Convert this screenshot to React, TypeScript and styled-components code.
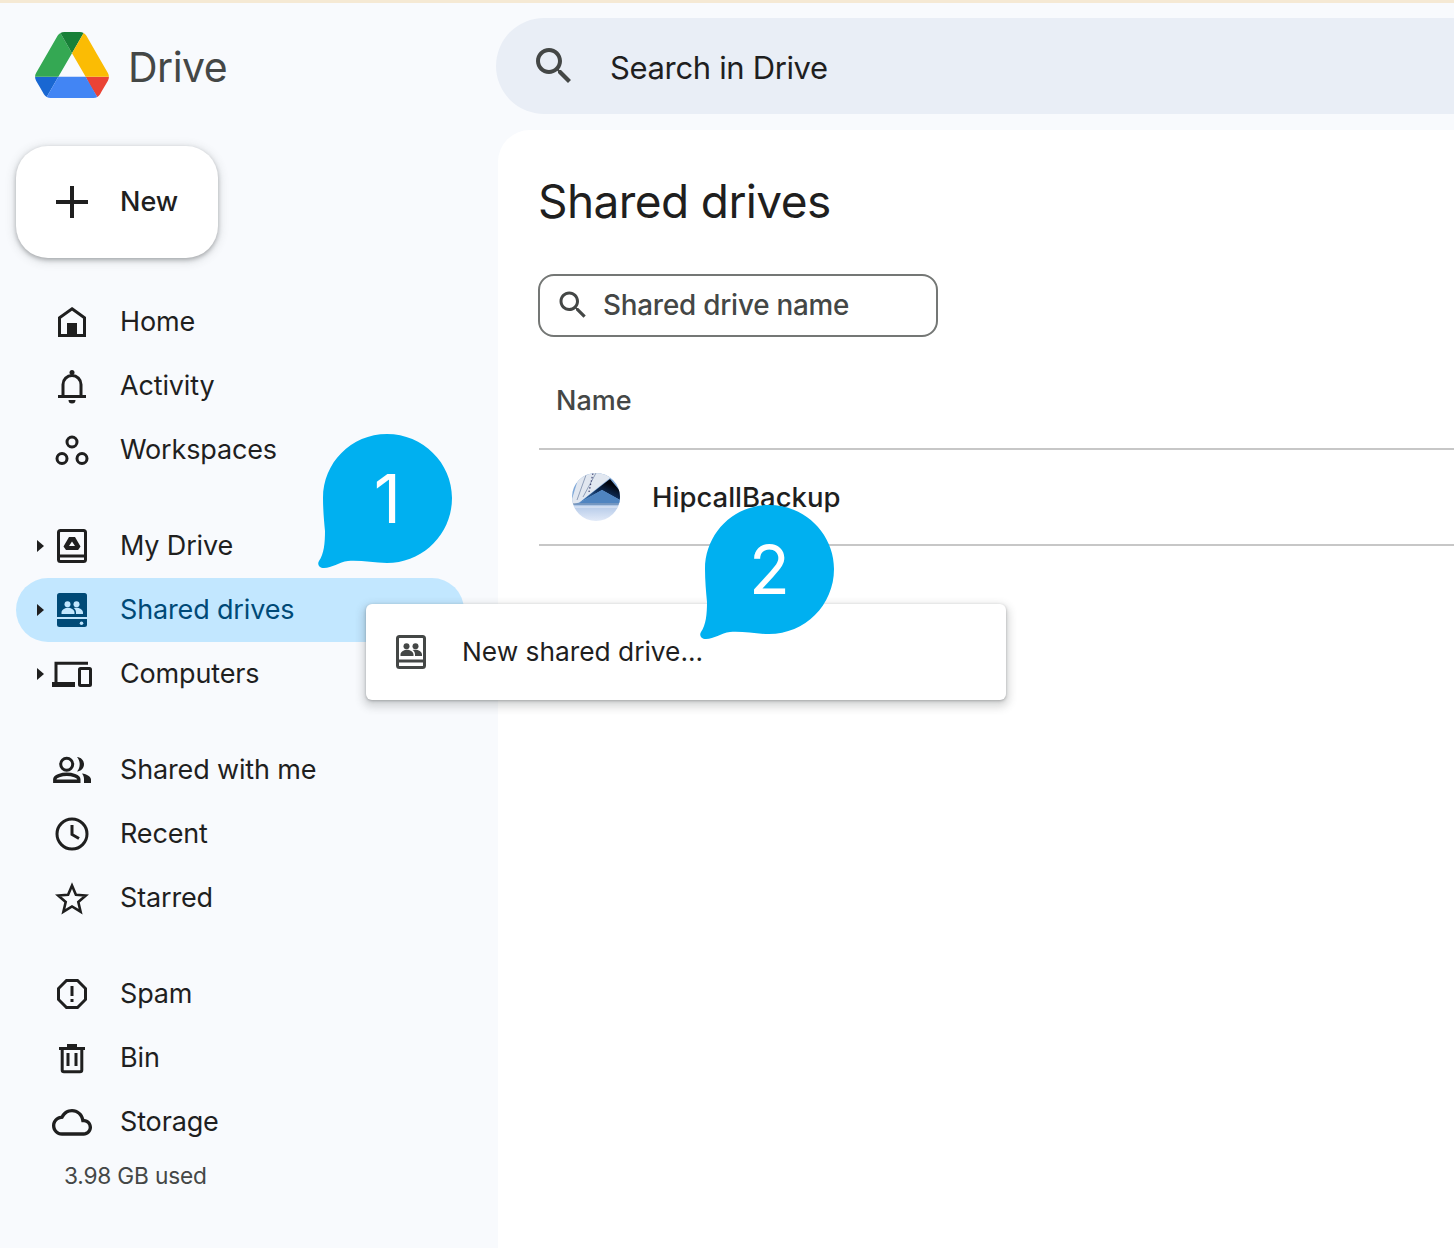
import React from 'react'
import styled, { createGlobalStyle } from 'styled-components'

const SANS = '"Inter", "Roboto", "Liberation Sans", sans-serif'

const GlobalStyle = createGlobalStyle`
  html, body {
    margin: 0;
    padding: 0;
    background: #f8fafd;
  }

  body {
    font-family: ${SANS};
    color: #1f1f1f;
  }
`

const Page = styled.div`
  position: relative;
  display: grid;
  grid-template-columns: 498px 1fr;
  width: 1454px;
  height: 1248px;
  overflow: hidden;
  box-sizing: border-box;
  border-top: 3px solid #f5e9d4;
  background: #f8fafd;
`

const Sidebar = styled.aside`
  display: flex;
  flex-direction: column;
  padding-top: 29px;
`

const Brand = styled.div`
  display: flex;
  align-items: center;
  height: 66px;
  padding-left: 35px;
  gap: 19px;
`

const BrandName = styled.span`
  padding-top: 4px;
  font-size: 41px;
  font-weight: 400;
  letter-spacing: -0.5px;
  color: #444746;
`

const NewButton = styled.button`
  display: flex;
  align-items: center;
  width: 202px;
  height: 112px;
  margin: 48px 0 32px 16px;
  padding: 0 0 2px 32px;
  gap: 24px;
  border: 0;
  border-radius: 32px;
  background: #fff;
  box-shadow: 0 2px 4px rgba(60, 64, 67, 0.35), 0 2px 10px 2px rgba(60, 64, 67, 0.15);
  font-family: inherit;
  font-size: 27px;
  font-weight: 500;
  color: #1f1f1f;

  svg {
    margin-top: 2px;
  }
`

const NavGroup = styled.nav`
  display: flex;
  flex-direction: column;
  margin-bottom: 32px;

  &:last-of-type {
    margin-bottom: 0;
  }
`

const NavRow = styled.div<{ $active?: boolean }>`
  display: flex;
  align-items: center;
  width: 448px;
  height: 64px;
  margin-left: 16px;
  padding-left: 16px;
  box-sizing: border-box;
  border-radius: 32px;
  background: ${p => (p.$active ? '#c2e7ff' : 'transparent')};
  color: ${p => (p.$active ? '#004a77' : '#1f1f1f')};
  font-size: 27px;
  letter-spacing: -0.15px;
`

const CaretSlot = styled.span`
  display: flex;
  align-items: center;
  justify-content: center;
  width: 16px;
  height: 16px;
`

const Caret = styled.span`
  width: 0;
  height: 0;
  margin-left: 1px;
  border-top: 6px solid transparent;
  border-bottom: 6px solid transparent;
  border-left: 7px solid #1f1f1f;
`

const Icon = styled.svg<{ $size?: number }>`
  flex: none;
  width: ${p => p.$size || 48}px;
  height: ${p => p.$size || 48}px;
  fill: currentColor;
`

const NavLabel = styled.span`
  margin-left: 24px;
  padding-bottom: 2px;
`

const StorageUsed = styled.div`
  margin: 7px 0 0 64px;
  font-size: 22.7px;
  line-height: 30px;
  letter-spacing: -0.2px;
  color: #444746;
`

const Content = styled.div`
  display: flex;
  flex-direction: column;
  padding-top: 15px;
`

const SearchBar = styled.div`
  display: flex;
  align-items: center;
  height: 96px;
  margin-left: -2px;
  padding-left: 34px;
  gap: 32px;
  border-radius: 48px 0 0 48px;
  background: #e9eef6;
  font-size: 31px;
  color: #1f1f1f;
  letter-spacing: -0.35px;
`

const SearchText = styled.span`
  padding-top: 2px;
`

const Card = styled.main`
  flex: 1;
  margin-top: 16px;
  padding: 39px 0 0 41px;
  border-radius: 32px 0 0 0;
  background: #fff;
`

const Title = styled.h1`
  margin: 0 0 41px -1px;
  font-size: 46px;
  font-weight: 400;
  line-height: 64px;
  letter-spacing: -0.6px;
  color: #1f1f1f;
`

const FilterBox = styled.div`
  display: flex;
  align-items: center;
  width: 400px;
  height: 63px;
  margin-left: -1px;
  padding: 0 0 1px 15px;
  gap: 12px;
  box-sizing: border-box;
  border: 2px solid #747775;
  border-radius: 16px;
  font-size: 27.8px;
  font-weight: 500;
  color: #444746;
  letter-spacing: -0.2px;
`

const TableHead = styled.div`
  display: flex;
  align-items: center;
  height: 113px;
  padding: 16px 0 0 17px;
  box-sizing: border-box;
  border-bottom: 2px solid #c7c7c7;
  font-size: 27px;
  font-weight: 500;
  color: #444746;
`

const TableRow = styled.div`
  display: flex;
  align-items: center;
  height: 96px;
  padding-left: 33px;
  gap: 32px;
  box-sizing: border-box;
  border-bottom: 2px solid #c7c7c7;
  font-size: 27.5px;
  font-weight: 500;
  color: #1f1f1f;
`

const Avatar = styled.svg`
  flex: none;
  width: 48px;
  height: 48px;
`

const Menu = styled.div`
  position: absolute;
  left: 366px;
  top: 601px;
  z-index: 2;
  display: flex;
  align-items: center;
  width: 640px;
  height: 96px;
  padding-left: 21px;
  gap: 27px;
  box-sizing: border-box;
  border-radius: 6px;
  background: #fff;
  box-shadow: 0 4px 8px 3px rgba(60, 64, 67, 0.2), 0 1px 3px rgba(60, 64, 67, 0.35);
  font-size: 26.3px;
  color: #1f1f1f;
`

const MenuIcon = styled.span`
  display: flex;
  color: #444746;
`

const MenuLabel = styled.span`
  padding-bottom: 2px;
`

const Bubble = styled.div<{ $left: number; $top: number }>`
  position: absolute;
  left: ${p => p.$left}px;
  top: ${p => p.$top}px;
  z-index: 3;
  width: 136px;
  height: 136px;

  svg {
    display: block;
    width: 136px;
    height: 136px;
    fill: #00b0f0;
  }
`

const BubbleNumber = styled.span`
  position: absolute;
  left: 6px;
  top: 1px;
  display: flex;
  align-items: center;
  justify-content: center;
  width: 129px;
  height: 129px;
  font-size: 67px;
  font-weight: 400;
  color: #fff;
`

const SEARCH_PATH =
  'M15.5 14h-.79l-.28-.27C15.41 12.59 16 11.11 16 9.5 16 5.91 13.09 3 9.5 3S3 5.91 3 9.5 5.91 16 9.5 16c1.61 0 3.09-.59 4.23-1.57l.27.28v.79l5 4.99L20.49 19l-4.99-5zm-6 0C7.01 14 5 11.99 5 9.5S7.01 5 9.5 5 14 7.01 14 9.5 11.99 14 9.5 14z'

const PEOPLE_HEADS = (
  <>
    <circle cx="19.5" cy="18.3" r="3" />
    <circle cx="28.5" cy="18.3" r="3" />
  </>
)

const PEOPLE_BODIES =
  'M13.5 28v-1.5c0-3 4-4.8 6.5-4.8s6.5 1.8 6.5 4.8V28zM28 28v-1.5c0-2-1-3.4-2.4-4.4.9-.3 2-.4 3-.4 2.6 0 6.4 1.8 6.4 4.8V28z'

const line = { fill: 'none', stroke: 'currentColor', strokeWidth: 3 }

const glyphs: Record<string, React.ReactNode> = {
  home: (
    <>
      <path {...line} d="M24 10.8 36.5 19.8V37.5H11.5V19.8Z" />
      <rect x="19" y="25" width="10" height="14" />
    </>
  ),
  activity: (
    <>
      <path {...line} d="M15 34V22.5a9 9 0 0 1 18 0V34" />
      <path {...line} d="M10 34.5H38" />
      <circle cx="24" cy="10.5" r="2.5" />
      <path d="M20.5 38h7a3.5 3.5 0 0 1-7 0z" />
    </>
  ),
  workspaces: (
    <>
      <circle {...line} cx="24" cy="16" r="5" />
      <circle {...line} cx="14" cy="32.5" r="5" />
      <circle {...line} cx="34" cy="32.5" r="5" />
    </>
  ),
  myDrive: (
    <>
      <rect {...line} x="10.5" y="8.5" width="27" height="31" rx="2" />
      <path {...line} d="M10.5 34H37.5" />
      <path
        fillRule="evenodd"
        d="M21 15h6l5.5 9.5-2.4 3.5H18l-2.5-3.5zM24 19.6 21 24h6z"
      />
    </>
  ),
  sharedDrives: (
    <>
      <path d="M11.5 7h25A2.5 2.5 0 0 1 39 9.5V31H9V9.5A2.5 2.5 0 0 1 11.5 7z" />
      <path d="M9 33h30v5.5a2.5 2.5 0 0 1-2.5 2.5h-25A2.5 2.5 0 0 1 9 38.5z" />
      <circle cx="33.5" cy="37.3" r="1.8" fill="#c2e7ff" />
      <g fill="#c2e7ff">
        {PEOPLE_HEADS}
        <path d={PEOPLE_BODIES} />
      </g>
    </>
  ),
  computers: (
    <>
      <path {...line} d="M8 34.5V13.2H40" />
      <path d="M4 32h23v5H4z" />
      <rect {...line} x="31.5" y="18.5" width="11" height="17" rx="1" />
    </>
  ),
  sharedWithMe: (
    <>
      <circle {...line} cx="18.7" cy="18.2" r="6" />
      <path {...line} strokeWidth={3.4} d="M6.8 35.3v-2c0-3 7-5 12-5s12 2 12 5v2z" />
      <path d="M29 11c4 .3 7 3.4 7 7.3s-3 7-7 7.3c1.7-2 2.7-4.5 2.7-7.3S30.7 13 29 11z" />
      <path d="M34 27.5c5 .7 9 3 9 6V37h-7v-4c0-2.3-.8-4-2-5.5z" />
    </>
  ),
  recent: (
    <>
      <circle {...line} cx="24" cy="24" r="15" />
      <path {...line} d="M24 15v9.5l7 4" />
    </>
  ),
  starred: (
    <path
      {...line}
      strokeWidth={2.6}
      d="M24 11.5l3.9 9.2 9.9.8-7.5 6.5 2.3 9.7-8.6-5.2-8.6 5.2 2.3-9.7-7.5-6.5 9.9-.8z"
    />
  ),
  spam: (
    <>
      <path {...line} d="M18.5 10.5h11l8 8v11l-8 8h-11l-8-8v-11z" />
      <rect x="22.5" y="16" width="3" height="10" />
      <rect x="22.5" y="29" width="3" height="3" />
    </>
  ),
  bin: (
    <>
      <path {...line} d="M11 14.5H37" />
      <path {...line} d="M19 11.5h10" />
      <path {...line} d="M14.2 14V36a1.8 1.8 0 0 0 1.8 1.8h16a1.8 1.8 0 0 0 1.8-1.8V14" />
      <rect x="18.5" y="19" width="3" height="13" />
      <rect x="26.5" y="19" width="3" height="13" />
    </>
  ),
  storage: (
    <path
      transform="translate(4 4.3) scale(1.667)"
      d="M19.35 10.04C18.67 6.59 15.64 4 12 4 9.11 4 6.6 5.64 5.35 8.04 2.34 8.36 0 10.91 0 14c0 3.31 2.69 6 6 6h13c2.76 0 5-2.24 5-5 0-2.64-2.05-4.78-4.65-4.96zM19 18H6c-2.21 0-4-1.79-4-4 0-2.05 1.53-3.76 3.56-3.97l1.07-.11.5-.95C8.08 7.14 9.94 6 12 6c2.62 0 4.88 1.86 5.39 4.43l.3 1.5 1.53.11c1.56.1 2.78 1.41 2.78 2.96 0 1.65-1.35 3-3 3z"
    />
  ),
  newDrive: (
    <>
      <rect {...line} x="10.5" y="8.5" width="27" height="31" rx="2" />
      <path {...line} d="M10.5 33H37.5" />
      {PEOPLE_HEADS}
      <path d={PEOPLE_BODIES} />
    </>
  ),
}

type NavItem = { id: string; label: string; caret?: boolean; active?: boolean }

const groups: NavItem[][] = [
  [
    { id: 'home', label: 'Home' },
    { id: 'activity', label: 'Activity' },
    { id: 'workspaces', label: 'Workspaces' },
  ],
  [
    { id: 'myDrive', label: 'My Drive', caret: true },
    { id: 'sharedDrives', label: 'Shared drives', caret: true, active: true },
    { id: 'computers', label: 'Computers', caret: true },
  ],
  [
    { id: 'sharedWithMe', label: 'Shared with me' },
    { id: 'recent', label: 'Recent' },
    { id: 'starred', label: 'Starred' },
  ],
  [
    { id: 'spam', label: 'Spam' },
    { id: 'bin', label: 'Bin' },
    { id: 'storage', label: 'Storage' },
  ],
]

const DriveLogo = () => (
  <svg width="74" height="66" viewBox="0 0 87.3 78">
    <path d="m6.6 66.85 3.85 6.65c.8 1.4 1.95 2.5 3.3 3.3l13.75-23.8h-27.5c0 1.55.4 3.1 1.2 4.5z" fill="#1967d2" />
    <path d="m43.65 25-13.75-23.8c-1.35.8-2.5 1.9-3.3 3.3l-25.4 44a9.06 9.06 0 0 0-1.2 4.5h27.5z" fill="#34a853" />
    <path d="m73.55 76.8c1.35-.8 2.5-1.9 3.3-3.3l1.6-2.75 7.65-13.25c.8-1.4 1.2-2.95 1.2-4.5h-27.502l5.852 11.5z" fill="#ea4335" />
    <path d="m43.65 25 13.75-23.8c-1.35-.8-2.9-1.2-4.5-1.2h-18.5c-1.6 0-3.15.45-4.5 1.2z" fill="#188038" />
    <path d="m59.8 53h-32.3l-13.75 23.8c1.35.8 2.9 1.2 4.5 1.2h50.8c1.6 0 3.15-.45 4.5-1.2z" fill="#4285f4" />
    <path d="m73.4 26.5-12.7-22c-.8-1.4-1.95-2.5-3.3-3.3l-13.75 23.8 16.15 28h27.45c0-1.55-.4-3.1-1.2-4.5z" fill="#fbbc04" />
  </svg>
)

const DriveAvatar = () => (
  <Avatar viewBox="0 0 48 48">
    <defs>
      <clipPath id="avatar-clip">
        <circle cx="24" cy="24" r="24" />
      </clipPath>
      <linearGradient id="avatar-bg" x1="0" y1="0" x2="0" y2="1">
        <stop offset="0.5" stopColor="#7fa8d8" />
        <stop offset="0.72" stopColor="#b9cdea" />
        <stop offset="1" stopColor="#e2eaf8" />
      </linearGradient>
      <linearGradient id="avatar-band" x1="1" y1="0" x2="0.3" y2="1">
        <stop offset="0.25" stopColor="#01040c" />
        <stop offset="0.6" stopColor="#0f2f5c" />
        <stop offset="1" stopColor="#3d76b4" />
      </linearGradient>
    </defs>
    <g clipPath="url(#avatar-clip)">
      <rect width="48" height="48" fill="url(#avatar-bg)" />
      <path d="M0 26 8 0H40L38 5 8 29 0 32z" fill="#e1e7f0" />
      <path d="M5 27 14 2M11 24 24 0" stroke="#8f9fb8" strokeWidth="1" fill="none" />
      <path d="M17 19 21 0" stroke="#3f4270" strokeWidth="1.2" strokeDasharray="1.5 2" fill="none" />
      <path d="M7 30 38 6 48 18V27L30 17z" fill="url(#avatar-band)" />
      <path d="M7 30H48V27L30 17z" fill="#4f84c0" />
      <path d="M0 31H48" stroke="#1d4a82" strokeWidth="1" opacity="0.7" />
      <path d="M0 34H48" stroke="#f4f7fc" strokeWidth="1" opacity="0.8" />
    </g>
  </Avatar>
)

const SpeechBubble: React.FC<{ left: number; top: number; n: number }> = ({ left, top, n }) => (
  <Bubble $left={left} $top={top}>
    <svg viewBox="0 0 136 136">
      <path d="M70 1C106 1 135 30 135 65 135 101 106 130 70 130 56 130 44 127 31 128 22 129 15 135 7 135 2 135 0 131 2 128 7 121 8 110 8 98 7 88 6 76 6 65 6 30 34 1 70 1Z" />
    </svg>
    <BubbleNumber>{n}</BubbleNumber>
  </Bubble>
)

const App: React.FC = () => (
  <Page>
    <GlobalStyle />
    <Sidebar>
      <Brand>
        <DriveLogo />
        <BrandName>Drive</BrandName>
      </Brand>
      <NewButton>
        <Icon viewBox="0 0 48 48">
          <path {...line} strokeWidth={4} d="M24 8V40M8 24H40" />
        </Icon>
        New
      </NewButton>
      {groups.map((group, i) => (
        <NavGroup key={i}>
          {group.map(item => (
            <NavRow key={item.id} $active={item.active}>
              <CaretSlot>{item.caret && <Caret />}</CaretSlot>
              <Icon viewBox="0 0 48 48">{glyphs[item.id]}</Icon>
              <NavLabel>{item.label}</NavLabel>
            </NavRow>
          ))}
        </NavGroup>
      ))}
      <StorageUsed>3.98 GB used</StorageUsed>
    </Sidebar>
    <Content>
      <SearchBar>
        <Icon viewBox="0 0 24 24">
          <path d={SEARCH_PATH} fill="#444746" />
        </Icon>
        <SearchText>Search in Drive</SearchText>
      </SearchBar>
      <Card>
        <Title>Shared drives</Title>
        <FilterBox>
          <Icon $size={36} viewBox="0 0 24 24">
            <path d={SEARCH_PATH} />
          </Icon>
          Shared drive name
        </FilterBox>
        <TableHead>Name</TableHead>
        <TableRow>
          <DriveAvatar />
          HipcallBackup
        </TableRow>
      </Card>
    </Content>
    <Menu>
      <MenuIcon>
        <Icon viewBox="0 0 48 48">{glyphs.newDrive}</Icon>
      </MenuIcon>
      <MenuLabel>New shared drive...</MenuLabel>
    </Menu>
    <SpeechBubble left={317} top={430} n={1} />
    <SpeechBubble left={699} top={501} n={2} />
  </Page>
)

export default App
